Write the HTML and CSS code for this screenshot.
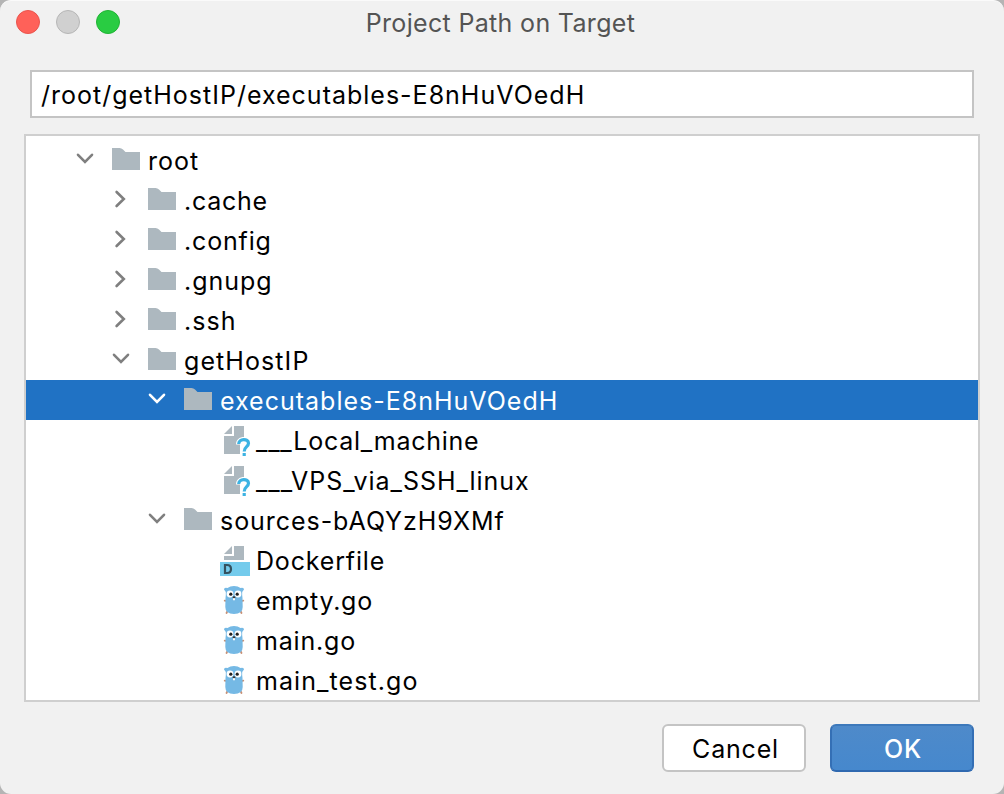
FILE: index.html
```html
<!DOCTYPE html>
<html lang="en">
<head>
<meta charset="utf-8">
<title>Project Path on Target</title>
<link rel="stylesheet" href="styles.css">
</head>
<body>
<svg class="defs" width="0" height="0">
  <symbol id="down" viewBox="0 0 32 32"><path d="M8 10.800L15 18L22 10.800" fill="none" stroke="currentColor" stroke-width="2.600" stroke-linecap="round"/></symbol>
  <symbol id="right" viewBox="0 0 32 32"><path d="M10.600 8L17.800 15L10.600 22" fill="none" stroke="currentColor" stroke-width="2.600" stroke-linecap="round"/></symbol>
  <symbol id="folder" viewBox="0 0 32 32"><path d="M2 4H9.500Q11.500 4 13 5.500L15.500 8H30V26H2Z" fill="#adb8bf"/></symbol>
  <symbol id="unknown" viewBox="0 0 32 32">
    <path d="M12 2V10H4ZM14 2H24V13C19.500 13 16 15.500 16 20.500H20V30H4V12H14Z" fill="#adb8bf"/>
    <path d="M18.700 20C18.700 14.200 28.500 14.200 28.500 19.300C28.500 22.800 24.200 22.500 24.200 27.500" fill="none" stroke="#3db3e3" stroke-width="3.200"/>
    <path d="M22.600 29h3.200v3h-3.200z" fill="#3db3e3"/>
  </symbol>
  <symbol id="docker" viewBox="0 0 32 32">
    <path d="M12 2V10H4ZM14 2H24V16H4V12H14Z" fill="#adb8bf"/>
    <path d="M0 18H30V32H0Z" fill="#74cbec"/>
    <path d="M5 21V29H7Q11 29 11 25Q11 21 7 21Z" fill="none" stroke="#34515f" stroke-width="2.200"/>
  </symbol>
  <symbol id="gopher" viewBox="0 0 32 32">
    <path d="M7.500 27L6.500 29M20.500 27L21.500 29M6 16.800L4.700 16.600M22 16.800L23.300 16.600" stroke="#c69076" stroke-width="1.800" stroke-linecap="round"/>
    <path d="M5.800 8L4 5.500Q4 3 7.500 4Q10 2 14 2Q18 2 20.500 4Q24 3 24 5.500L22.200 8Q22 11 22.500 14L22.700 23Q22.700 30 14 30Q5.300 30 5.300 23L5.500 14Q6 11 5.800 8Z" fill="#75b9e5"/>
    <circle cx="10" cy="10" r="3.400" fill="#fff"/><circle cx="18" cy="10" r="3.400" fill="#fff"/>
    <circle cx="10.800" cy="10.200" r="1.600" fill="#222"/><circle cx="17.200" cy="10.200" r="1.600" fill="#222"/>
    <path d="M13 14h2v2.300h-2z" fill="#fff"/><ellipse cx="14" cy="13.300" rx="1.500" ry="1" fill="#333"/>
  </symbol>
</svg>
<div class="dialog">
  <header class="titlebar">
    <div class="lights"><i class="light close"></i><i class="light min"></i><i class="light max"></i></div>
    <h1 class="title">Project Path on Target</h1>
  </header>
  <div class="field"><span class="t-field">/root/getHostIP/executables-E8nHuVOedH</span></div>
  <div class="tree">
    <div class="row l0"><svg class="chev"><use href="#down"/></svg><svg class="icon"><use href="#folder"/></svg><span class="t-root">root</span></div>
    <div class="row l1"><svg class="chev"><use href="#right"/></svg><svg class="icon"><use href="#folder"/></svg><span class="t-cache">.cache</span></div>
    <div class="row l1"><svg class="chev"><use href="#right"/></svg><svg class="icon"><use href="#folder"/></svg><span class="t-config">.config</span></div>
    <div class="row l1"><svg class="chev"><use href="#right"/></svg><svg class="icon"><use href="#folder"/></svg><span class="t-gnupg">.gnupg</span></div>
    <div class="row l1"><svg class="chev"><use href="#right"/></svg><svg class="icon"><use href="#folder"/></svg><span class="t-ssh">.ssh</span></div>
    <div class="row l1"><svg class="chev"><use href="#down"/></svg><svg class="icon"><use href="#folder"/></svg><span class="t-host">getHostIP</span></div>
    <div class="row l2 selected"><svg class="chev"><use href="#down"/></svg><svg class="icon"><use href="#folder"/></svg><span class="t-exec">executables-E8nHuVOedH</span></div>
    <div class="row l3"><svg class="icon"><use href="#unknown"/></svg><span class="t-local">___Local_machine</span></div>
    <div class="row l3"><svg class="icon"><use href="#unknown"/></svg><span class="t-vps">___VPS_via_SSH_linux</span></div>
    <div class="row l2"><svg class="chev"><use href="#down"/></svg><svg class="icon"><use href="#folder"/></svg><span class="t-src">sources-bAQYzH9XMf</span></div>
    <div class="row l3"><svg class="icon"><use href="#docker"/></svg><span class="t-docker">Dockerfile</span></div>
    <div class="row l3"><svg class="icon"><use href="#gopher"/></svg><span class="t-empty">empty.go</span></div>
    <div class="row l3"><svg class="icon"><use href="#gopher"/></svg><span class="t-main">main.go</span></div>
    <div class="row l3"><svg class="icon"><use href="#gopher"/></svg><span class="t-test">main_test.go</span></div>
  </div>
  <footer class="actions">
    <button class="btn"><span class="t-cancel">Cancel</span></button>
    <button class="btn primary"><span class="t-ok">OK</span></button>
  </footer>
</div>
</body>
</html>
```
FILE: styles.css
```css
* { box-sizing: border-box; }
body { margin: 0; background: #b4b4b4; font: 25px/40px Inter, "Liberation Sans", sans-serif; color: #000; }
.defs { display: block; }
.dialog { width: 1004px; height: 794px; background: #f1f1f1; border-radius: 11px; border-top: 1px solid #fafafa; overflow: hidden; display: flex; flex-direction: column; }
.titlebar { height: 69px; padding: 9px 16px 0; display: grid; grid-template-columns: 120px 1fr 120px; flex: none; }
.lights { display: flex; gap: 16px; }
.light { width: 24px; height: 24px; border-radius: 50%; border: 1px solid; }
.close { background: #ff6159; border-color: #e9544d; }
.min { background: #d0d0d0; border-color: #b6b6b6; }
.max { background: #29cc42; border-color: #20b334; }
.title { margin: -7px 3px 0 0; font-size: 25px; font-weight: 400; line-height: 40px; letter-spacing: .33px; color: #545454; text-align: center; white-space: nowrap; }
.field { height: 48px; margin: 0 30px; padding: 3px 9px; border: 2px solid #c4c4c4; background: #fff; flex: none; }
.tree { height: 568px; margin: 16px 24px 0; padding-top: 4px; border: 2px solid #cfcfcf; background: #fff; flex: none; }
.row { height: 40px; display: flex; padding-top: 1px; white-space: nowrap; }
.icon { width: 32px; height: 32px; margin: 3px 6px 0 0; flex: none; }
.chev { width: 32px; height: 32px; margin: 3px 8px 0 0; color: #7f7f7f; flex: none; }
.row span { margin-left: 0; }
.l0 { padding-left: 44px; }
.l1 { padding-left: 80px; }
.l2 { padding-left: 116px; }
.l3 { padding-left: 194px; }
.l3 span { margin-left: -2px; }
.selected { background: #2072c4; color: #fff; }
.selected .chev { color: #fff; }
/* Label tracking */
.t-field, .t-root, .t-exec { letter-spacing: 1px; }
.t-cache, .t-empty, .t-local { letter-spacing: .75px; }
.t-config, .t-docker, .t-main { letter-spacing: .83px; }
.t-gnupg, .t-vps, .t-src { letter-spacing: .95px; }
.t-ssh, .t-host, .t-test { letter-spacing: 1.08px; }
.t-cancel { letter-spacing: .8px; margin-left: 3px; }
.t-ok { letter-spacing: .8px; margin-left: 2px; }
.actions { display: flex; justify-content: flex-end; gap: 24px; padding: 22px 30px 0; }
.btn { width: 144px; height: 48px; padding: 2px 0 0; border: 2px solid #c4c4c4; border-radius: 6px; background: #fff; color: #000; font: inherit; line-height: 40px; }
.primary { color: #fff; font-weight: 500; border-color: #3d79bb #346fb5 #2f69b0; background: linear-gradient(#4e8aca, #4688cd); }
```
